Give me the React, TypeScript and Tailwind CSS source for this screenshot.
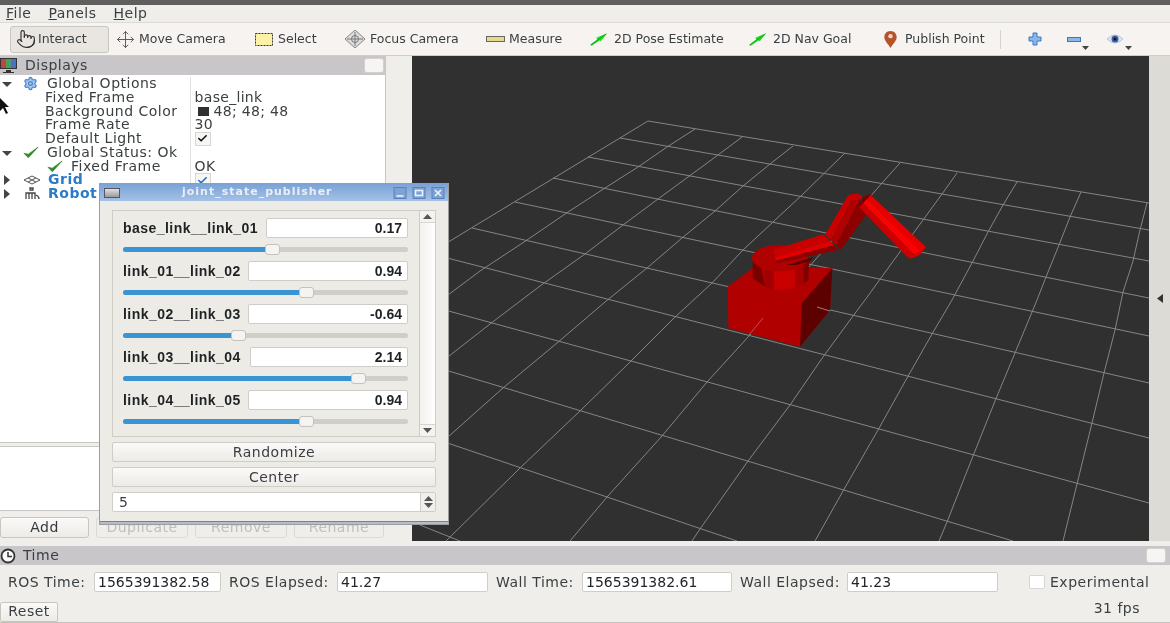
import React from "react";
import { Pointer, Move, Settings, Check } from "lucide-react";

const TXT = "text-[#3a3f41]";

function Arrow({ open }: { open: boolean }) {
  return (
    <svg width="10" height="10" viewBox="0 0 10 10" className="shrink-0">
      {open ? <path d="M0 3 L10 3 L5 8 Z" fill="#444" /> : <path d="M2 0 L8 5 L2 10 Z" fill="#444" />}
    </svg>
  );
}

function Green({ size = 16 }: { size?: number }) {
  return (
    <svg width={size} height={size * 0.8} viewBox="0 0 18 14" className="shrink-0">
      <path d="M1 8 L6 13 L17 1 L6 9 Z" fill="#2e8b2e" stroke="#2e8b2e" strokeWidth="0.8" />
    </svg>
  );
}

function Pose() {
  return (
    <svg width="18" height="13" viewBox="0 0 20 14" className="shrink-0">
      <path d="M0 13 L8 7 L7 5 L19 0 L12 9 L10.5 8 L2 14 Z" fill="#22dd22" />
      <path d="M1 13 L18 1" stroke="#0c8a0c" strokeWidth="0.8" />
    </svg>
  );
}

function Tree() {
  const Val = ({ children }: { children?: React.ReactNode }) => (
    <div className="w-[195px] flex items-center pl-[4px] h-full tracking-[0.3px]">{children}</div>
  );
  const Box = ({ blue }: { blue?: boolean }) => (
    <div className="w-[16px] h-[14px] bg-[#f7f6f4] border border-[#d8d6d0] flex items-center justify-center">
      <Check size={11} strokeWidth={3.5} className={blue ? "text-[#1f6fc0]" : "text-[#111111]"} />
    </div>
  );
  return (
    <div className={`flex-1 bg-white pt-[2px] text-[14px] tracking-[0.5px] leading-[13.75px] whitespace-nowrap ${TXT} relative`}>
      <div className="flex h-[13.75px]">
        <div className="w-[191px] flex items-center pl-[2px] border-r border-[#e4e2de]">
          <Arrow open />
          <Settings size={15} className="ml-[11px] mr-[9px] text-[#4a86cf] fill-[#a8c8ee]" />
          Global Options
        </div>
        <Val />
      </div>
      {[
        ["Fixed Frame", "base_link"],
        ["Background Color", "color"],
        ["Frame Rate", "30"],
        ["Default Light", "box"],
      ].map(([a, b]) => (
        <div key={a} className="flex h-[13.75px]">
          <div className="w-[191px] pl-[45px] border-r border-[#e4e2de]">{a}</div>
          <Val>
            {b === "color" ? (
              <>
                <span className="w-[11px] h-[9px] bg-[#303030] ml-[3px] mr-[5px]" />
                48; 48; 48
              </>
            ) : b === "box" ? (
              <Box />
            ) : (
              b
            )}
          </Val>
        </div>
      ))}
      <div className="flex h-[13.75px]">
        <div className="w-[191px] flex items-center pl-[2px] border-r border-[#e4e2de]">
          <Arrow open />
          <span className="ml-[11px] mr-[8px] flex">
            <Green />
          </span>
          Global Status: Ok
        </div>
        <Val />
      </div>
      <div className="flex h-[13.75px]">
        <div className="w-[191px] flex items-center pl-[47px] border-r border-[#e4e2de]">
          <span className="mr-[8px] flex">
            <Green />
          </span>
          Fixed Frame
        </div>
        <Val>OK</Val>
      </div>
      <div className="flex h-[13.75px]">
        <div className="w-[191px] flex items-center pl-[2px] border-r border-[#e4e2de] font-bold text-[#2b7bc8]">
          <Arrow open={false} />
          <svg width="18" height="10" viewBox="0 0 18 10" className="ml-[11px] mr-[7px] shrink-0">
            <path d="M1 5 L9 1 L17 5 L9 9 Z M5 3 L13 7 M13 3 L5 7" fill="none" stroke="#555" strokeWidth="1" />
          </svg>
          Grid
        </div>
        <Val>
          <Box blue />
        </Val>
      </div>
      <div className="flex h-[13.75px]">
        <div className="w-[191px] flex items-center pl-[2px] font-bold text-[#2b7bc8]">
          <Arrow open={false} />
          <svg width="18" height="13" viewBox="0 0 18 13" className="ml-[11px] mr-[7px] shrink-0">
            <path d="M7 1 h3 v2 h-3 Z M3 12 V6 h9 v6 M6 6 v6 M9 6 v6 M13 8 q3 1 3 4" fill="none" stroke="#444" strokeWidth="1.3" />
          </svg>
          Robot
        </div>
      </div>
    </div>
  );
}

function SmallBtn({ w, disabled, children }: { w: string; disabled?: boolean; children: React.ReactNode }) {
  return (
    <div
      className={`${w} h-[21px] rounded-[3px] border flex items-center justify-center text-[14px] tracking-[0.5px] ${
        disabled
          ? "border-[#dcdad5] text-[#c0bfba] bg-[#efeeea]"
          : "border-[#c8c6c1] text-[#33383a] bg-gradient-to-b from-[#fbfaf9] to-[#ecebe7]"
      }`}
    >
      {children}
    </div>
  );
}

function LeftPanel() {
  return (
    <div className="w-[386px] flex flex-col">
      <div className="h-[19px] bg-[#c8c6c9] flex items-center relative shrink-0">
        <svg width="20" height="18" viewBox="0 0 20 18" className="ml-[-1px] shrink-0">
          <rect x="1" y="1" width="17" height="11" fill="#333" />
          <rect x="2" y="2" width="5" height="9" fill="#c0434a" />
          <rect x="7" y="2" width="5" height="9" fill="#4aa05a" />
          <rect x="12" y="2" width="5" height="9" fill="#4a70c8" />
          <path d="M7 13 h5 v2 h3 v1 H4 v-1 h3 Z" fill="#333" />
        </svg>
        <span className={`ml-[6px] text-[14px] tracking-[0.5px] ${TXT}`}>Displays</span>
        <div className="absolute right-[2px] top-[2px] w-[20px] h-[15px] bg-[#f6f5f3] border border-[#d4d2cf] rounded-[3px]" />
      </div>
      <div className="flex-1 flex flex-col border-r border-b border-[#c9c7c2]">
        <Tree />
      </div>
      <div className="h-[3px] shrink-0" />
      <div className="h-[65px] shrink-0 bg-white border-t border-b border-r border-[#c9c7c2]" />
      <div className="h-[6px] shrink-0" />
      <div className="flex pr-[2px] gap-[7px] shrink-0">
        <SmallBtn w="w-[89px]">Add</SmallBtn>
        <SmallBtn w="w-[92px]" disabled>
          Duplicate
        </SmallBtn>
        <SmallBtn w="w-[92px]" disabled>
          Remove
        </SmallBtn>
        <SmallBtn w="w-[90px]" disabled>
          Rename
        </SmallBtn>
      </div>
      <div className="h-[8px] shrink-0" />
    </div>
  );
}

function Scene() {
  const G = "#858585";
  const lines = [
    "648,121 1149,203",
    "620,138 1149,230",
    "588,157 1149,261",
    "553,178 1149,298",
    "515,202 1149,336",
    "472,228 1149,383",
    "412,249 1149,438",
    "412,301 1149,503",
    "412,360 1013,541",
    "412,431 737,541",
    "420,525 460,541",
    "648,121 412,264",
    "695,129 667,147 638,167 605,188 568,212 527,240 480,271 412,322",
    "742,137 718,155 688,177 658,199 623,225 585,254 540,286 490,324 412,385",
    "793,146 770,164 743,186 715,211 682,238 647,268 605,302 557,343 503,388 412,469",
    "845,153 802,195 773,222 743,250 712,283 673,319 630,362 580,411 520,468 446,541",
    "900,163 882,183 749,336 707,382 662,436 607,497 570,541",
    "957,173 942,194 923,220 865,300 853,316 823,357 790,405 748,461 700,529 692,541",
    "1017,182 1003,205 988,232 973,261 952,300 932,334 907,378 878,430 843,491 815,541",
    "1081,192 1070,217 1059,245 1046,277 1037,300 1015,353 995,401 973,456 947,522 939,541",
    "1147,203 1140,230 1133,261 1123,292 1115,330 1104,373 1092,423 1077,484 1063,541",
  ];
  return (
    <svg viewBox="412 56 737 485" className="w-[737px] h-[485px] block bg-[#303030] shrink-0">
      {lines.map((p) => (
        <polyline key={p} points={p} fill="none" stroke={G} strokeWidth="1" />
      ))}
      <g transform="translate(600 170) scale(0.33333)">
        <polygon points="383,350 470,285 697,295 690,420 600,530 385,475" fill="#b00000" />
        <polygon points="612,392 697,295 690,420 600,530 605,400" fill="#5c0000" />
        <polygon points="458,270 480,270 495,350 458,325" fill="#7a0000" />
        <polygon points="495,270 520,270 522,360 495,350" fill="#a00000" />
        <polygon points="520,270 585,270 585,355 522,360" fill="#c80000" />
        <polygon points="585,270 610,270 612,340 585,355" fill="#a80000" />
        <polygon points="610,270 627,270 625,330 612,340" fill="#800000" />
        <ellipse cx="540" cy="264" rx="84" ry="40" fill="#b00000" />
        <polygon points="560,285 640,262 632,272 590,285" fill="#5a0000" />
        <polygon points="520,240 670,193 690,212 525,262" fill="#c80000" />
        <polygon points="525,262 690,212 702,226 528,272" fill="#e00000" />
        <polygon points="528,272 702,226 715,240 530,280" fill="#8c0000" />
        <polygon points="675,195 743,78 760,82 692,210" fill="#c80000" />
        <polygon points="692,210 760,82 778,90 708,226" fill="#b00000" />
        <polygon points="708,226 778,90 798,135 722,240" fill="#8c0000" />
        <ellipse cx="765" cy="81" rx="22" ry="10" fill="#c80000" />
        <polygon points="778,112 790,80 812,72 820,85" fill="#7a0000" />
        <polygon points="812,75 978,232 960,243 801,87" fill="#e80000" />
        <polygon points="801,87 960,243 943,254 789,100" fill="#ff0000" />
        <polygon points="789,100 943,254 925,265 778,112" fill="#cc0000" />
        <polygon points="925,265 978,232 960,255 935,265" fill="#d80000" />
      </g>
      <polyline points="763,318 749,335" fill="none" stroke="#c05050" strokeWidth="1" />
      <polyline points="817,307 830,311" fill="none" stroke="#a08080" strokeWidth="1" />
    </svg>
  );
}

function Tool({ cls, icon, label }: { cls: string; icon: React.ReactNode; label: string }) {
  return (
    <div className={`flex items-center whitespace-nowrap shrink-0 ${cls}`}>
      {icon}
      {label}
    </div>
  );
}

function Toolbar() {
  return (
    <div className="h-[33px] bg-[#f6f3f0] flex items-center border-t border-[#dddbd6] text-[12.5px] text-[#3a3f41] shrink-0">
      <div className="ml-[10px] w-[99px] h-[27px] rounded-[3px] bg-[#e9e6e1] border border-[#c8c6c1] flex items-center pl-[5px] shrink-0">
        <Pointer size={20} strokeWidth={1.4} className="mr-[2px] text-[#333]" />
        Interact
      </div>
      <Tool
        cls="ml-[7px] w-[110px]"
        label="Move Camera"
        icon={<Move size={19} strokeWidth={1.2} className="mr-[4px] text-[#555] shrink-0" />}
      />
      <Tool
        cls="ml-[29px] w-[61px]"
        label="Select"
        icon={
          <svg width="18" height="13" viewBox="0 0 18 13" className="mr-[5px] shrink-0">
            <rect x="0.5" y="0.5" width="17" height="12" fill="#fbf2a8" stroke="#333" strokeDasharray="2 1" />
          </svg>
        }
      />
      <Tool
        cls="ml-[29px] w-[114px]"
        label="Focus Camera"
        icon={
          <svg width="20" height="18" viewBox="0 0 20 18" className="mr-[5px] shrink-0">
            <path d="M10 0 L20 9 L10 18 L0 9 Z" fill="#ddd" stroke="#888" />
            <path d="M10 2 V16 M2 9 H18" stroke="#777" strokeWidth="1" />
            <circle cx="10" cy="9" r="3.5" fill="none" stroke="#777" />
          </svg>
        }
      />
      <Tool
        cls="ml-[27px] w-[77px]"
        label="Measure"
        icon={
          <svg width="19" height="6" viewBox="0 0 19 6" className="mr-[4px] shrink-0">
            <rect x="0.5" y="0.5" width="18" height="5" fill="#e6d98a" stroke="#666" />
          </svg>
        }
      />
      <Tool cls="ml-[27px] w-[134px]" label="2D Pose Estimate" icon={<span className="mr-[6px] flex"><Pose /></span>} />
      <Tool cls="ml-[25px] w-[105px]" label="2D Nav Goal" icon={<span className="mr-[6px] flex"><Pose /></span>} />
      <Tool
        cls="ml-[30px] w-[101px]"
        label="Publish Point"
        icon={
          <svg width="13" height="17" viewBox="0 0 13 18" className="mr-[8px] shrink-0">
            <path d="M6.5 0 C2.5 0 0 3 0 6.5 C0 10.5 4.5 14 6.5 18 C8.5 14 13 10.5 13 6.5 C13 3 10.5 0 6.5 0 Z" fill="#b5532a" />
            <circle cx="6.5" cy="5.5" r="2.3" fill="#f0d8c0" />
          </svg>
        }
      />
      <div className="ml-[15px] w-[1px] h-[19px] bg-[#d5d3ce]" />
      <svg width="14" height="14" viewBox="0 0 14 14" className="ml-[27px]">
        <path d="M5 1 h4 v4 h4 v4 h-4 v4 h-4 v-4 h-4 v-4 h4 Z" fill="#8ab6ea" stroke="#3a78c2" />
      </svg>
      <svg width="14" height="5" viewBox="0 0 14 5" className="ml-[25px]">
        <rect x="0.5" y="0.5" width="13" height="4" fill="#8ab6ea" stroke="#3a78c2" />
      </svg>
      <svg width="7" height="4" viewBox="0 0 7 4" className="ml-[1px] mt-[18px]">
        <path d="M0 0 H7 L3.5 4 Z" fill="#444" />
      </svg>
      <svg width="18" height="12" viewBox="0 0 18 12" className="ml-[17px]">
        <path d="M1 6 Q9 -2 17 6 Q9 14 1 6 Z" fill="#dce6f4" stroke="#b4c6e0" />
        <circle cx="9" cy="6" r="3.5" fill="#3a5fa8" />
        <circle cx="9" cy="6" r="1.5" fill="#111" />
      </svg>
      <svg width="7" height="4" viewBox="0 0 7 4" className="ml-[1px] mt-[18px]">
        <path d="M0 0 H7 L3.5 4 Z" fill="#444" />
      </svg>
    </div>
  );
}

function TimeInput({ w, value }: { w: string; value: string }) {
  return (
    <div className={`${w} h-[20px] bg-white border border-[#cfcdc8] rounded-[2px] flex items-center pl-[3px] text-[#22262a] tracking-normal shrink-0`}>
      {value}
    </div>
  );
}

function TimePanel() {
  return (
    <div className={`shrink-0 text-[14px] tracking-[0.5px] ${TXT}`}>
      <div className="h-[19px] bg-[#c8c6c9] flex items-center relative">
        <svg width="16" height="16" viewBox="0 0 16 16" className="shrink-0">
          <circle cx="8" cy="8" r="6.5" fill="#fafafa" stroke="#333" strokeWidth="1.8" />
          <path d="M8 4 V8.5 H12" fill="none" stroke="#333" strokeWidth="1.5" />
        </svg>
        <span className="ml-[7px]">Time</span>
        <div className="absolute right-[4px] top-[2px] w-[20px] h-[15px] bg-[#f6f5f3] border border-[#d4d2cf] rounded-[3px]" />
      </div>
      <div className="h-[36px] flex items-start pt-[7px] whitespace-nowrap leading-[20px]">
        <span className="ml-[8px] w-[86px]">ROS Time:</span>
        <TimeInput w="w-[127px]" value="1565391382.58" />
        <span className="ml-[8px] w-[108px]">ROS Elapsed:</span>
        <TimeInput w="w-[151px]" value="41.27" />
        <span className="ml-[8px] w-[86px]">Wall Time:</span>
        <TimeInput w="w-[150px]" value="1565391382.61" />
        <span className="ml-[8px] w-[107px]">Wall Elapsed:</span>
        <TimeInput w="w-[151px]" value="41.23" />
        <div className="ml-[31px] mt-[3px] w-[16px] h-[14px] bg-white border border-[#d8d6d0] rounded-[2px]" />
        <span className="ml-[5px]">Experimental</span>
      </div>
      <div className="h-[21px] flex items-center justify-between">
        <div className="w-[58px] h-[20px] border border-[#c8c6c1] rounded-[2px] bg-gradient-to-b from-[#fbfaf9] to-[#ecebe7] flex items-center justify-center">
          Reset
        </div>
        <span className="mr-[30px] mb-[6px]">31 fps</span>
      </div>
      <div className="h-[1px] bg-[#c4c2bd]" />
    </div>
  );
}

const joints: { name: string; val: string; w: string; pct: number }[] = [
  { name: "base_link__link_01", val: "0.17", w: "w-[142px]", pct: 52.3 },
  { name: "link_01__link_02", val: "0.94", w: "w-[160px]", pct: 64.3 },
  { name: "link_02__link_03", val: "-0.64", w: "w-[160px]", pct: 40.3 },
  { name: "link_03__link_04", val: "2.14", w: "w-[158px]", pct: 82.3 },
  { name: "link_04__link_05", val: "0.94", w: "w-[160px]", pct: 64.3 },
];

function Triangle({ up }: { up: boolean }) {
  return (
    <svg width="9" height="5" viewBox="0 0 9 5">
      <path d={up ? "M0 5 L9 5 L4.5 0 Z" : "M0 0 L9 0 L4.5 5 Z"} fill="#555" />
    </svg>
  );
}

function Dialog() {
  return (
    <div className="absolute left-[99px] top-[183px] w-[350px] h-[342px] bg-[#ecebe6] border border-[#9a9ca2] flex flex-col">
      <div className="h-[17px] bg-gradient-to-b from-[#7aa3d6] to-[#a5c1e6] flex items-center relative shrink-0">
        <div className="ml-[4px] w-[16px] h-[10px] bg-gradient-to-b from-[#e0e0e0] to-[#9a9a9a] border border-[#556]" />
        <span className="absolute left-[82px] top-0 text-[11px] leading-[15px] font-bold tracking-[1px] text-[#e8eef6]">
          joint_state_publisher
        </span>
        <div className="ml-auto mr-[3px] flex gap-[5px]">
          {["M3 9 H10", "M3 3.5 H10 V8.5 H3 Z", "M3.5 3 L9.5 9 M9.5 3 L3.5 9"].map((d) => (
            <svg key={d} width="14" height="12" viewBox="0 0 13 12">
              <rect x="0.5" y="0.5" width="12" height="11" fill="#7da3d6" stroke="#5b82b8" />
              <path d={d} stroke="#eef3fa" strokeWidth="1.6" fill="none" />
            </svg>
          ))}
        </div>
      </div>
      <div className="flex-1 px-[12px] pt-[9px] flex flex-col">
        <div className="h-[227px] border border-[#cfcdc8] flex shrink-0">
          <div className="flex-1 pl-[10px] pr-[11px] pt-[7px] text-[#1f2224]">
            {joints.map((j) => (
              <div key={j.name} className="h-[43px]">
                <div className="h-[20px] flex items-center justify-between font-['Liberation_Sans',sans-serif] font-bold">
                  <span className="text-[14px] tracking-[0.45px] whitespace-nowrap">{j.name}</span>
                  <div className={`${j.w} h-[20px] bg-white border border-[#cfcdc8] rounded-[2px] flex items-center justify-end pr-[5px] text-[14px]`}>
                    {j.val}
                  </div>
                </div>
                <div className="relative h-[5px] mt-[9px] rounded-full bg-[#d0cec9]">
                  <div className="h-full rounded-full bg-[#3a94d4]" style={{ width: `${j.pct}%` }} />
                  <div
                    className="absolute top-[-3px] w-[15px] h-[11px] -ml-[7px] rounded-[3px] bg-[#f6f4f2] border border-[#c4c2bd]"
                    style={{ left: `${j.pct}%` }}
                  />
                </div>
              </div>
            ))}
          </div>
          <div className="w-[16px] border-l border-[#cfcdc8] flex flex-col">
            <div className="h-[12px] flex items-center justify-center border-b border-[#d8d6d0] bg-[#f4f3f0]">
              <Triangle up />
            </div>
            <div className="flex-1 bg-gradient-to-r from-[#f2f1ee] to-white" />
            <div className="h-[12px] flex items-center justify-center border-t border-[#d8d6d0] bg-[#f4f3f0]">
              <Triangle up={false} />
            </div>
          </div>
        </div>
        <div className={`mt-[5px] h-[20px] rounded-[2px] border border-[#cfcdc8] bg-gradient-to-b from-[#fbfaf9] to-[#ecebe7] flex items-center justify-center text-[14px] tracking-[0.5px] ${TXT}`}>
          Randomize
        </div>
        <div className={`mt-[5px] h-[20px] rounded-[2px] border border-[#cfcdc8] bg-gradient-to-b from-[#fbfaf9] to-[#ecebe7] flex items-center justify-center text-[14px] tracking-[0.5px] ${TXT}`}>
          Center
        </div>
        <div className={`mt-[5px] h-[20px] rounded-[2px] border border-[#cfcdc8] bg-white flex items-center pl-[6px] text-[14px] ${TXT}`}>
          <span className="flex-1">5</span>
          <div className="w-[15px] h-full bg-[#f0efeb] border-l border-[#cfcdc8] flex flex-col items-center justify-center gap-[2px]">
            <Triangle up />
            <Triangle up={false} />
          </div>
        </div>
      </div>
      <div className="h-[3px] bg-[#b8bcc4] border-t border-[#7d8088] shrink-0" />
    </div>
  );
}

export default function App() {
  return (
    <div className="w-[1170px] h-[623px] relative overflow-hidden bg-[#efeeea] font-['DejaVu_Sans',sans-serif] flex flex-col blur-[0.4px]">
      <div className="h-[5px] bg-[#5f5f5f] shrink-0" />
      <div className={`h-[17px] flex items-center pl-[6px] gap-[17px] text-[14px] tracking-[0.5px] shrink-0 ${TXT}`}>
        <span><u>F</u>ile</span>
        <span><u>P</u>anels</span>
        <span><u>H</u>elp</span>
      </div>
      <Toolbar />
      <div className="h-[1px] shrink-0 bg-[#cfcdc8]" />
      <div className="flex h-[490px] shrink-0">
        <LeftPanel />
        <div className="w-[26px] shrink-0" />
        <Scene />
        <div className="flex-1 bg-[#dddbd6] flex items-center justify-center mb-[5px]">
          <svg width="6" height="9" viewBox="0 0 6 9">
            <path d="M6 0 L0 4.5 L6 9 Z" fill="#333" />
          </svg>
        </div>
      </div>
      <TimePanel />
      <Dialog />
      <svg width="10" height="16" viewBox="0 0 10 16" className="absolute left-0 top-[98px]">
        <path d="M0 0 L9 9 L5 9 L8 15 L6 16 L3 10 L0 13 Z" fill="#111" />
      </svg>
    </div>
  );
}
